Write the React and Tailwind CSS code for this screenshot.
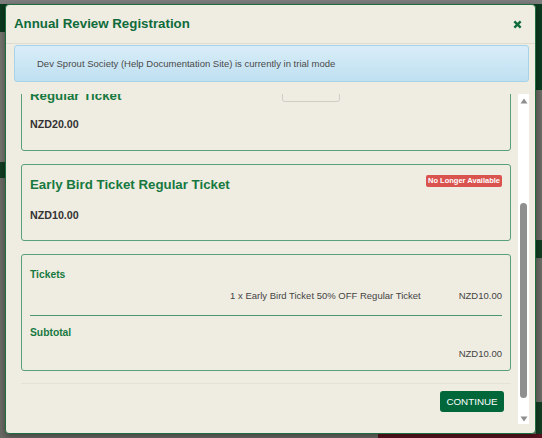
import React from "react";

const F = { fontFamily: '"Liberation Sans", Arial, sans-serif' };

function CloseIcon() {
  return (
    <svg width="9" height="9" viewBox="0 0 10 10">
      <path d="M1.5 1.5 L8.5 8.5 M8.5 1.5 L1.5 8.5" stroke="#0f6b3a" strokeWidth="2.6" strokeLinecap="butt" />
    </svg>
  );
}

function Scrollbar() {
  return (
    <div className="w-[11px] h-[330px] bg-white flex flex-col items-center shrink-0">
      <svg className="mt-[4px]" width="8" height="6" viewBox="0 0 8 6">
        <path d="M4 0.5 L7.5 5.5 L0.5 5.5 Z" fill="#8f8f8f" />
      </svg>
      <div className="mt-[99px] w-[7px] h-[195px] rounded-full bg-[#8f8f8f]" />
      <svg className="mt-[18px]" width="8" height="6" viewBox="0 0 8 6">
        <path d="M0.5 0.5 L7.5 0.5 L4 5.5 Z" fill="#8f8f8f" />
      </svg>
    </div>
  );
}

export default function App() {
  return (
    <div className="relative w-[542px] h-[438px] overflow-hidden bg-[#6a6a64]" style={F}>
      {/* dimmed page behind the dialog */}
      <div className="flex flex-col h-full">
        <div className="h-[4px] bg-[#7d7d7d]" />
        <div className="h-[28px] bg-[#0b3a1f]" />
        <div className="flex-1 flex justify-between">
          <div className="w-[6px] flex flex-col">
            <div className="h-[130px] bg-[#74746d]" />
            <div className="h-[16px] bg-[#123d22]" />
            <div className="flex-1 bg-[#6b6b65]" />
          </div>
          <div className="w-[6px] flex flex-col">
            <div className="h-[58px] bg-[#0b3a1f]" />
            <div className="h-[150px] bg-[#6b6b65]" />
            <div className="h-[18px] bg-[#123d22]" />
            <div className="flex-1 bg-[#6b6b65]" />
            <div className="h-[32px] bg-[#123d22]" />
          </div>
        </div>
        <div className="h-[4px] flex">
          <div className="w-[378px] bg-[#6a6a64]" />
          <div className="flex-1 bg-[#5a1420]" />
        </div>
      </div>

      {/* dialog */}
      <div className="absolute left-[5px] top-[4px] w-[531px] h-[430px] bg-[#efece2] border border-[#1f6e40] rounded-[4px] shadow-[0_2px_6px_rgba(0,0,0,0.4)] flex flex-col">
        <div className="h-[39px] border-b border-[#dedbd0] flex items-center justify-between pl-[8px] pr-[13px]">
          <div className="text-[13.3px] font-bold text-[#0f6b3a] leading-[16px]">Annual Review Registration</div>
          <CloseIcon />
        </div>

        <div className="ml-[8px] mr-[6px] mt-[1px] h-[37px] rounded-[3px] border border-[#a6d3ea] bg-gradient-to-b from-[#d9edf8] to-[#bfe0f1] flex items-center pl-[22px]">
          <span className="text-[9.5px] text-[#4a4a4a] leading-[12px]">
            Dev Sprout Society (Help Documentation Site) is currently in trial mode
          </span>
        </div>

        <div className="ml-[8px] mt-[12px] flex">
          <div className="w-[504px] h-[330px] overflow-hidden">
            <div className="-mt-[20px] px-[7px] flex flex-col">
              {/* card 1 (scrolled partly out of view) */}
              <div className="h-[77px] border-[1.5px] border-[#58a079] rounded-[3px] px-[8px] flex flex-col">
                <div className="flex items-start pt-[4.5px]">
                  <div className="w-[252px] mt-[8px] text-[13.3px] font-bold text-[#17793f] leading-[16px]">Regular Ticket</div>
                  <div className="w-[58px] h-[22px] border border-[#cfcdc6] rounded-[3px] bg-[#efece2] flex items-end justify-between px-[10px] pb-[6px] text-[9.4px] text-[#444] leading-[10px]">
                    <span>0</span>
                    <span>▾</span>
                  </div>
                </div>
                <div className="mt-[14.5px] text-[10.7px] font-bold text-[#333] leading-[13px]">NZD20.00</div>
              </div>

              {/* card 2 */}
              <div className="mt-[13px] h-[77px] border-[1.5px] border-[#58a079] rounded-[3px] px-[8px] flex flex-col">
                <div className="flex items-start justify-between pt-[9.5px]">
                  <div className="mt-[2px] text-[13.3px] font-bold text-[#17793f] leading-[16px]">Early Bird Ticket Regular Ticket</div>
                  <div className="h-[12px] px-[2px] rounded-[2px] bg-[#d9534f] text-white text-[7.5px] font-bold leading-[12px]">No Longer Available</div>
                </div>
                <div className="mt-[16px] text-[10.7px] font-bold text-[#333] leading-[13px]">NZD10.00</div>
              </div>

              {/* card 3: summary */}
              <div className="mt-[13px] h-[117px] border-[1.5px] border-[#58a079] rounded-[3px] px-[8px] flex flex-col">
                <div className="mt-[13px] text-[10.3px] font-bold text-[#17793f] leading-[13px]">Tickets</div>
                <div className="mt-[8.5px] flex justify-end text-[9.5px] text-[#444] leading-[12px]">
                  <span>1 x Early Bird Ticket 50% OFF Regular Ticket</span>
                  <span className="ml-[38px]">NZD10.00</span>
                </div>
                <div className="mt-[13px] h-[1.5px] bg-[#4e9670]" />
                <div className="mt-[9.5px] text-[10.3px] font-bold text-[#17793f] leading-[13px]">Subtotal</div>
                <div className="mt-[9.5px] flex justify-end text-[9.5px] text-[#444] leading-[12px]">
                  <span>NZD10.00</span>
                </div>
              </div>

              {/* footer */}
              <div className="mt-[12px] border-t border-[#e4e1d6] pt-[7px] flex justify-end">
                <div className="mr-[7px] w-[64px] h-[21px] rounded-[3px] bg-[#00673a] text-white text-[9.8px] leading-[21px] text-center">
                  CONTINUE
                </div>
              </div>
            </div>
          </div>
          <Scrollbar />
        </div>
      </div>
    </div>
  );
}
